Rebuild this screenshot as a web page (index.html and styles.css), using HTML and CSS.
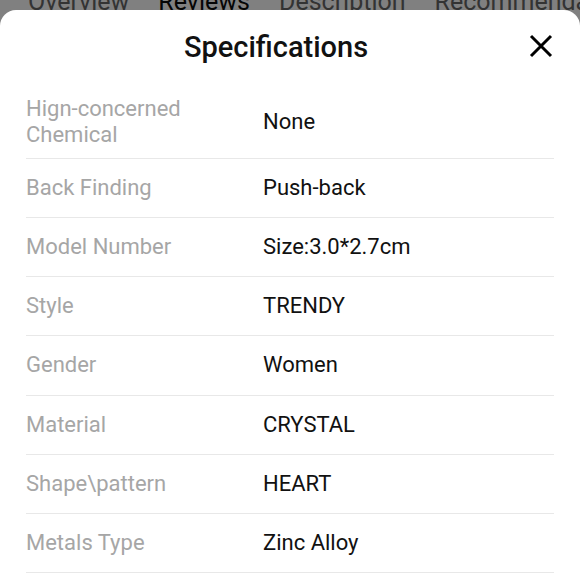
FILE: index.html
```html
<!DOCTYPE html>
<html>
<head>
<meta charset="utf-8">
<link rel="stylesheet" href="styles.css">
</head>
<body>
<div class="tabs">
  <div class="tabs-inner">
    <span class="tab">Overview</span>
    <span class="tab active">Reviews</span>
    <span class="tab">Description</span>
    <span class="tab">Recommendations</span>
  </div>
</div>
<div class="sheet">
  <div class="header">
    <h1 class="title">Specifications</h1>
    <span class="close" aria-label="Close">
      <svg width="24" height="24" viewBox="0 0 24 24"><path d="M2 2 L22 22 M22 2 L2 22" stroke="#000" stroke-width="3" stroke-linecap="butt" fill="none"/></svg>
    </span>
  </div>
  <div class="list">
    <div class="row tall"><div class="label">Hign-concerned<br>Chemical</div><div class="value">None</div></div>
    <div class="row"><div class="label">Back Finding</div><div class="value">Push-back</div></div>
    <div class="row"><div class="label">Model Number</div><div class="value">Size:3.0*2.7cm</div></div>
    <div class="row"><div class="label">Style</div><div class="value">TRENDY</div></div>
    <div class="row"><div class="label">Gender</div><div class="value">Women</div></div>
    <div class="row"><div class="label">Material</div><div class="value">CRYSTAL</div></div>
    <div class="row"><div class="label">Shape\pattern</div><div class="value">HEART</div></div>
    <div class="row"><div class="label">Metals Type</div><div class="value">Zinc Alloy</div></div>
  </div>
</div>
</body>
</html>
```
FILE: styles.css
```css
html, body {
  margin: 0;
  padding: 0;
  background: #808080;
  font-family: Roboto, "Liberation Sans", sans-serif;
  width: 580px;
  height: 580px;
  overflow: hidden;
}
.tabs {
  height: 10px;
  overflow: hidden;
}
.tabs-inner {
  display: flex;
  gap: 29px;
  padding-left: 28px;
  margin-top: -11px;
  font-size: 25px;
  line-height: 26px;
  white-space: nowrap;
  color: #333;
}
.tab.active {
  color: #050505;
}
.sheet {
  background: #fff;
  border-radius: 16px 16px 0 0;
  padding: 0 26px;
  height: 600px;
}
.header {
  display: flex;
  align-items: flex-start;
  padding: 18px 0 26px;
}
.title {
  flex: 1;
  margin: 0;
  text-align: center;
  font-size: 29px;
  line-height: 38px;
  font-weight: 500;
  color: #111;
}
.close {
  flex: none;
  width: 28px;
  height: 24px;
  margin-top: 6px;
  display: flex;
  justify-content: flex-end;
}
.close svg { display: block; margin-right: 1px; }
.row {
  display: flex;
  align-items: center;
  padding: 15px 0;
  line-height: 28.15px;
  font-size: 22px;
  border-bottom: 1px solid #e8e8e8;
}
.row.tall {
  padding: 4px 0 10px;
}
.row.tall .label {
  line-height: 26px;
}
.label {
  width: 237px;
  flex: none;
  color: #a6a6a6;
}
.value {
  color: #111;
}
```
